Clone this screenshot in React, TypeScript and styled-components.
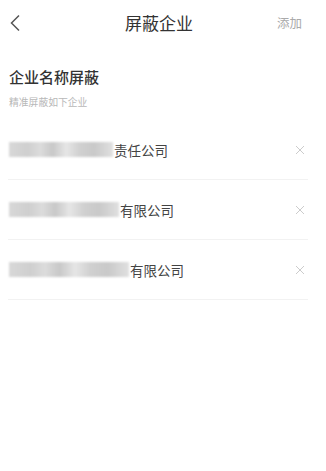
import React from 'react';
import styled, { createGlobalStyle } from 'styled-components';

const GlobalStyle = createGlobalStyle`
  html, body {
    margin: 0;
    padding: 0;
    background: #fff;
    font-family: "Noto Sans CJK SC", "Noto Sans", sans-serif;
  }
`;

const Page = styled.div`
  width: 326px;
  min-height: 471px;
  background: #fff;
`;

const Header = styled.div`
  height: 45px;
  display: grid;
  grid-template-columns: 60px 1fr 60px;
  align-items: center;
`;

const BackButton = styled.div`
  padding-left: 9px;
  display: flex;
  align-items: center;
  color: #555;
`;

const Title = styled.div`
  text-align: center;
  font-size: 17px;
  color: #333;
  padding-right: 8px;
`;

const AddButton = styled.div`
  text-align: right;
  padding-right: 24px;
  font-size: 12.5px;
  color: #aaa;
`;

const Section = styled.div`
  padding: 21px 9px 0;
  height: 54px;
`;

const SectionTitle = styled.div`
  font-size: 15px;
  font-weight: 500;
  color: #333;
  line-height: 22px;
`;

const SectionHint = styled.div`
  margin-top: 7px;
  font-size: 9.8px;
  color: #b8b8b8;
  line-height: 14px;
`;

const List = styled.div`
  padding: 0 18px 0 8px;
`;

const Row = styled.div`
  height: 59px;
  border-bottom: 1px solid #f2f2f2;
  display: flex;
  align-items: center;
  padding-left: 1px;
`;

const Name = styled.div`
  flex: 1;
  display: flex;
  align-items: center;
  font-size: 13.5px;
  color: #444;
`;

const Blur = styled.span<{ $w: number }>`
  display: inline-block;
  width: ${({ $w }) => $w}px;
  height: 15px;
  margin-right: 1px;
  filter: blur(1.2px);
  background: linear-gradient(
    to right,
    #d8d8d8 0%,
    #cfcfcf 18%,
    #dcdcdc 30%,
    #c8c8c8 42%,
    #e6e6e6 55%,
    #d0d0d0 68%,
    #c9c9c9 82%,
    #e0e0e0 100%
  );
`;

const Remove = styled.div`
  width: 12px;
  margin-right: 2px;
  display: flex;
  justify-content: center;
  color: #ccc;
`;

const companies = [
  { blur: 104, suffix: '责任公司' },
  { blur: 110, suffix: '有限公司' },
  { blur: 120, suffix: '有限公司' },
];

const App: React.FC = () => (
  <Page>
    <GlobalStyle />
    <Header>
      <BackButton>
        <svg width="12" height="18" viewBox="0 0 12 18" fill="none">
          <path d="M10 1.5 L2.5 9 L10 16.5" stroke="#555" strokeWidth="1.5" />
        </svg>
      </BackButton>
      <Title>屏蔽企业</Title>
      <AddButton>添加</AddButton>
    </Header>
    <Section>
      <SectionTitle>企业名称屏蔽</SectionTitle>
      <SectionHint>精准屏蔽如下企业</SectionHint>
    </Section>
    <List>
      {companies.map((c, i) => (
        <Row key={i}>
          <Name>
            <Blur $w={c.blur} />
            {c.suffix}
          </Name>
          <Remove>
            <svg width="10" height="10" viewBox="0 0 10 10">
              <path d="M1 1 L9 9 M9 1 L1 9" stroke="#ccc" strokeWidth="1" />
            </svg>
          </Remove>
        </Row>
      ))}
    </List>
  </Page>
);

export default App;
